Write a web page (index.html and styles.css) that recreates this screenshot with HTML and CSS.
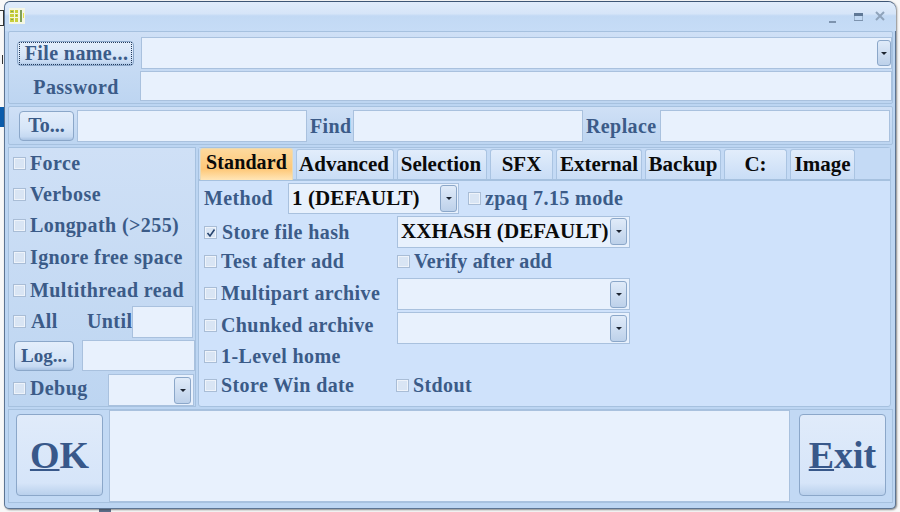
FILE: index.html
```html
<!DOCTYPE html>
<html>
<head>
<meta charset="utf-8">
<title>Add</title>
<link rel="stylesheet" href="styles.css">
</head>
<body>
<div class="behind behind-a"></div>
<div class="behind behind-b"></div>
<div class="behind behind-c"></div>
<div class="behind behind-d"></div>
<main class="window">
  <header class="titlebar">
    <svg class="appicon" width="16" height="16" viewBox="0 0 16 16"><rect width="16" height="16" fill="#f4f6e4"/><path d="M1 2h4v3H1zM6 2h3v3H6zM1 6h4v3H1zM6 6h3v3H6zM1 10h4v4H1zM6 10h3v4H6z" fill="#c9cf3c"/><path d="M2 3h2v1H2zM7 7h1v1H7zM2 11h2v1H2zM11 2h2v12h-2z" fill="#7f9f58"/><path d="M14 5h1v5h-1z" fill="#e5e04a"/></svg>
    <div class="winbtns">
      <svg width="60" height="14" viewBox="0 0 60 14"><path d="M1 11h7v2H1z" fill="#7d93ae"/><path d="M26 3h9v3h-9z" fill="#5f7896"/><path d="M26.500 6v4.500h8V6" stroke="#9db3cc" fill="none"/><path d="M26 10h9v1h-9z" fill="#7d93ae"/><path d="M48 2l8 8M56 2l-8 8" stroke="#8fa3bb" stroke-width="2" fill="none"/></svg>
    </div>
  </header>

  <section class="group group-file">
    <div class="file-row">
      <div class="labelcell"><button class="btn btn-file"><span class="dotted">File name...</span></button></div>
      <div class="combo combo-file"><span class="value"></span><span class="arrow arrow-small"></span></div>
    </div>
    <div class="file-row file-row-pass">
      <div class="labelcell"><span class="label lbl-pass">Password</span></div>
      <div class="field field-pass"></div>
    </div>
  </section>

  <section class="group group-to">
    <button class="btn btn-to">To...</button>
    <div class="field field-to"></div>
    <span class="label lbl-find">Find</span>
    <div class="field field-to"></div>
    <span class="label lbl-replace">Replace</span>
    <div class="field field-to"></div>
  </section>

  <div class="middle">
    <aside class="left">
      <label class="opt"><i class="box"></i>Force</label>
      <label class="opt"><i class="box"></i>Verbose</label>
      <label class="opt"><i class="box"></i>Longpath (&gt;255)</label>
      <label class="opt"><i class="box"></i>Ignore free space</label>
      <label class="opt"><i class="box"></i>Multithread read</label>
      <div class="opt row-all"><i class="box"></i><span class="all-text">All</span><span class="until">Until</span><div class="field field-until"></div></div>
      <div class="opt row-log"><button class="btn btn-log">Log...</button><div class="field field-log"></div></div>
      <div class="opt row-debug"><i class="box"></i><span class="debug-text">Debug</span><div class="combo combo-debug"><span class="value"></span><span class="arrow"></span></div></div>
    </aside>

    <section class="tabs">
      <nav class="tabstrip">
        <span class="tab active t-standard">Standard</span>
        <span class="tab t-advanced">Advanced</span>
        <span class="tab t-selection">Selection</span>
        <span class="tab t-sfx">SFX</span>
        <span class="tab t-external">External</span>
        <span class="tab t-backup">Backup</span>
        <span class="tab t-c">C:</span>
        <span class="tab t-image">Image</span>
      </nav>
      <div class="tabbody">
        <div class="trow r-method">
          <span class="label method">Method</span>
          <div class="combo combo-method"><span class="value">1 (DEFAULT)</span><span class="arrow"></span></div>
          <label class="chk chk-zpaq"><i class="box"></i>zpaq 7.15 mode</label>
        </div>
        <div class="trow r-hash">
          <label class="chk col1"><i class="box checked"><svg width="10" height="10" viewBox="0 0 10 10"><path d="M1.500 5l2.500 3L8.500 1.500" stroke="#27446e" stroke-width="1.600" fill="none"/></svg></i>Store file hash</label>
          <div class="combo combo-wide"><span class="value">XXHASH (DEFAULT)</span><span class="arrow"></span></div>
        </div>
        <div class="trow r-test">
          <label class="chk col1"><i class="box"></i>Test after add</label>
          <label class="chk chk-verify"><i class="box"></i>Verify after add</label>
        </div>
        <div class="trow r-multi">
          <label class="chk col1"><i class="box"></i>Multipart archive</label>
          <div class="combo combo-wide"><span class="value"></span><span class="arrow"></span></div>
        </div>
        <div class="trow r-chunk">
          <label class="chk col1"><i class="box"></i>Chunked archive</label>
          <div class="combo combo-wide"><span class="value"></span><span class="arrow"></span></div>
        </div>
        <div class="trow r-home">
          <label class="chk col1"><i class="box"></i>1-Level home</label>
        </div>
        <div class="trow r-date">
          <label class="chk col1"><i class="box"></i>Store Win date</label>
          <label class="chk chk-stdout"><i class="box"></i>Stdout</label>
        </div>
      </div>
    </section>
  </div>

  <footer class="bottom">
    <button class="btn btn-big btn-ok"><u>O</u>K</button>
    <div class="field field-log-area"></div>
    <button class="btn btn-big btn-exit"><u>E</u>xit</button>
  </footer>
</main>
</body>
</html>
```

FILE: styles.css
```css
* { box-sizing: border-box; }
html, body { margin: 0; padding: 0; }
body {
  position: relative;
  width: 900px;
  height: 512px;
  overflow: hidden;
  background: #f8f8f8;
  font-family: "Liberation Serif", serif;
  font-weight: 700;
  font-size: 20px;
  letter-spacing: 0.4px;
  color: #3b5b88;
}
.behind { position: absolute; }
.behind-a { left: 0; top: 10px; width: 4px; height: 16px; border: 1px solid #333; border-left: 0; }
.behind-b { left: 0; top: 55px; width: 3px; height: 9px; border-right: 1px solid #333; }
.behind-c { left: 0; top: 107px; width: 5px; height: 20px; background: #0b5cab; }
.behind-d { left: 99px; top: 507px; width: 12px; height: 5px; background: #5d6f8c; }

.window {
  position: absolute;
  left: 4px;
  top: 1px;
  width: 892px;
  height: 508px;
  padding: 0 2px 4px 3px;
  background: #bcd5f2;
  border: 1px solid #5c7493;
  border-top-color: #3e5675;
  border-radius: 6px 8px 5px 5px;
  box-shadow: 1px 1px 2px rgba(60, 60, 60, 0.6);
}
.titlebar {
  display: flex;
  align-items: center;
  justify-content: space-between;
  height: 29px;
  margin: 0 -3px 0 -3px;
  padding: 0 5px 0 4px;
  border-radius: 6px 8px 0 0;
  background: linear-gradient(#e0ecfb 0%, #d6e5f8 40%, #c2d9f4 48%, #c6dcf6 100%);
}
.appicon { display: block; margin-bottom: 2px; }
.winbtns { height: 14px; margin-right: 3px; }
.winbtns svg { display: block; }

.group {
  background: linear-gradient(#cfe0f6, #bdd5f1);
  border: 1px solid #a6c1df;
  border-radius: 2px;
}
.group-file { height: 73px; padding: 5px 0 0 0; }
.file-row { display: flex; height: 34px; }
.file-row-pass { height: 32px; }
.labelcell { width: 131px; display: flex; align-items: center; justify-content: center; flex: none; }
.lbl-pass { margin-left: 3px; }
.label { white-space: nowrap; line-height: 24px; }

.btn {
  font: inherit;
  letter-spacing: 0;
  color: inherit;
  background: linear-gradient(#e4eefb 0%, #d6e5f8 60%, #c5d9f2 88%, #a9c3e3 100%);
  border: 1px solid #8ba7c9;
  border-radius: 4px;
  padding: 0;
  display: flex;
  align-items: center;
  justify-content: center;
}
.btn-file { width: 117px; height: 25px; margin: 0 0 2px 2px; letter-spacing: 0.4px; }
.dotted { outline: 1px dotted #223a5c; outline-offset: 0; line-height: 21px; width: 111px; padding-left: 2px; text-align: center; white-space: nowrap; }

.field {
  background: #e8f1fd;
  border: 1px solid #a9c1de;
}
.combo {
  display: flex;
  align-items: center;
  background: #e8f1fd;
  border: 1px solid #a9c1de;
  color: #0a0a0a;
}
.combo .value { flex: 1; min-width: 0; white-space: nowrap; padding-left: 3px; font-size: 21px; letter-spacing: 0.1px; }
.arrow {
  position: relative;
  flex: none;
  width: 17px;
  height: 27px;
  margin-right: 1px;
  background: linear-gradient(#e0ebf9, #bdd1ea);
  border: 1px solid #8ba7c9;
  border-radius: 3px;
}
.arrow::after {
  content: "";
  position: absolute;
  left: 5px;
  top: 11px;
  border: 3px solid transparent;
  border-top: 3px solid #1c2430;
  border-bottom: 0;
}
.combo-file { width: 752px; height: 32px; margin-left: 1px; }
.arrow-small { width: 14px; height: 26px; margin-right: 0; }
.arrow-small::after { left: 3px; }
.field-pass { width: 753px; height: 30px; }

.group-to {
  display: flex;
  align-items: center;
  height: 39px;
  margin-top: 2px;
  padding-left: 10px;
}
.btn-to { width: 55px; height: 30px; flex: none; }
.field-to { width: 230px; height: 32px; flex: none; }
.btn-to + .field-to { margin-left: 3px; }
.lbl-find { width: 46px; padding-left: 3px; }
.lbl-replace { width: 77px; padding-left: 3px; }

.middle { display: flex; gap: 2px; margin-top: 2px; height: 260px; }
.left {
  width: 188px;
  flex: none;
  display: grid;
  grid-template-rows: 30px 32px 31px 33px 32px 31px 38px 26px;
  background: linear-gradient(#cfe0f6, #bdd5f1);
  border: 1px solid #a6c1df;
}
.opt { display: flex; align-items: center; padding-left: 4px; white-space: nowrap; }
.box {
  display: flex;
  align-items: center;
  justify-content: center;
  flex: none;
  width: 13px;
  height: 13px;
  background: #d9e5f4;
  border: 1px solid #a9bdd6;
  box-shadow: inset 0 0 0 1px #eef3fa;
  margin-right: 4px;
}
.all-text { width: 57px; padding-left: 1px; }
.until { width: 45px; }
.field-until { width: 61px; height: 32px; flex: none; }
.row-log { padding-left: 5px; }
.btn-log { width: 60px; height: 30px; flex: none; font-size: 19px; }
.field-log { width: 113px; height: 31px; margin-left: 8px; margin-bottom: 2px; flex: none; }
.debug-text { width: 78px; }
.combo-debug { width: 86px; height: 32px; margin-top: 4px; flex: none; }
.combo-debug .arrow { margin-right: 2px; }

.tabs {
  flex: 1;
  position: relative;
  margin-right: 2px;
  background: #cfe2fb;
  border: 1px solid #a6c1df;
  border-radius: 3px;
}
.tabstrip {
  display: flex;
  height: 33px;
  padding: 1px 0 0 1px;
  border-bottom: 2px solid #a6c1df;
  background: #c4daf5;
  color: #0a0a0a;
  letter-spacing: 0;
}
.tab {
  display: flex;
  align-items: center;
  justify-content: center;
  height: 30px;
  margin-right: 3px;
  background: linear-gradient(#e2edfb, #c9ddf6);
  border: 1px solid #aac4e2;
  border-bottom: 0;
  border-radius: 3px 3px 0 0;
  white-space: nowrap;
  font-size: 21px;
}
.tab.active {
  height: 32px;
  margin-top: -1px;
  background: linear-gradient(#fdd99d 0%, #fec878 65%, #ffe6b8 100%);
  border-color: #e9d9b4;
  padding-bottom: 4px;
  font-size: 20px;
  letter-spacing: 0.1px;
}
.t-standard { width: 93px; }
.t-advanced { width: 98px; padding-right: 2px; }
.t-selection { width: 90px; padding-right: 2px; }
.t-sfx { width: 63px; }
.t-external { width: 86px; }
.t-backup { width: 76px; }
.t-c { width: 63px; }
.t-image { width: 65px; }

.tabbody { padding: 1px 0 0 5px; }
.trow { display: flex; align-items: center; }
.chk { display: flex; align-items: center; white-space: nowrap; }
.chk .box { margin-right: 4px; }
.chk-verify { letter-spacing: 0.15px; }
.col1 { width: 193px; flex: none; }
.r-method { height: 32px; }
.method { width: 84px; flex: none; }
.combo-method { width: 171px; height: 31px; flex: none; }
.chk-zpaq { margin-left: 9px; }
.r-hash { height: 33px; margin-top: 1px; }
.r-hash .col1 { padding-top: 2px; }
.r-hash .box { margin-right: 5px; }
.combo-wide { width: 233px; height: 32px; flex: none; }
.combo-wide .arrow { margin-right: 2px; }
.r-test { height: 26px; }
.r-multi { height: 34px; margin-top: 3px; }
.r-multi .col1 { padding-bottom: 2px; }
.r-chunk { height: 34px; }
.r-chunk .col1 { padding-bottom: 5px; }
.r-home { height: 22px; }
.r-date { height: 36px; }
.chk-stdout { margin-left: -1px; }

.bottom {
  display: flex;
  align-items: stretch;
  height: 94px;
  margin-top: 2px;
  background: #c2d9f4;
  border: 1px solid #a6c1df;
}
.btn-big {
  flex: none;
  width: 87px;
  height: 82px;
  margin-top: 4px;
  font-size: 38px;
  background: linear-gradient(#e0ebfa 0%, #d6e5f9 85%, #b9d0ec 100%);
  color: #38588a;
}
.btn-big u { text-decoration-thickness: 2px; }
.btn-ok { margin-left: 7px; }
.field-log-area { width: 681px; margin-left: 6px; }
.btn-exit { margin-left: 9px; }
```
